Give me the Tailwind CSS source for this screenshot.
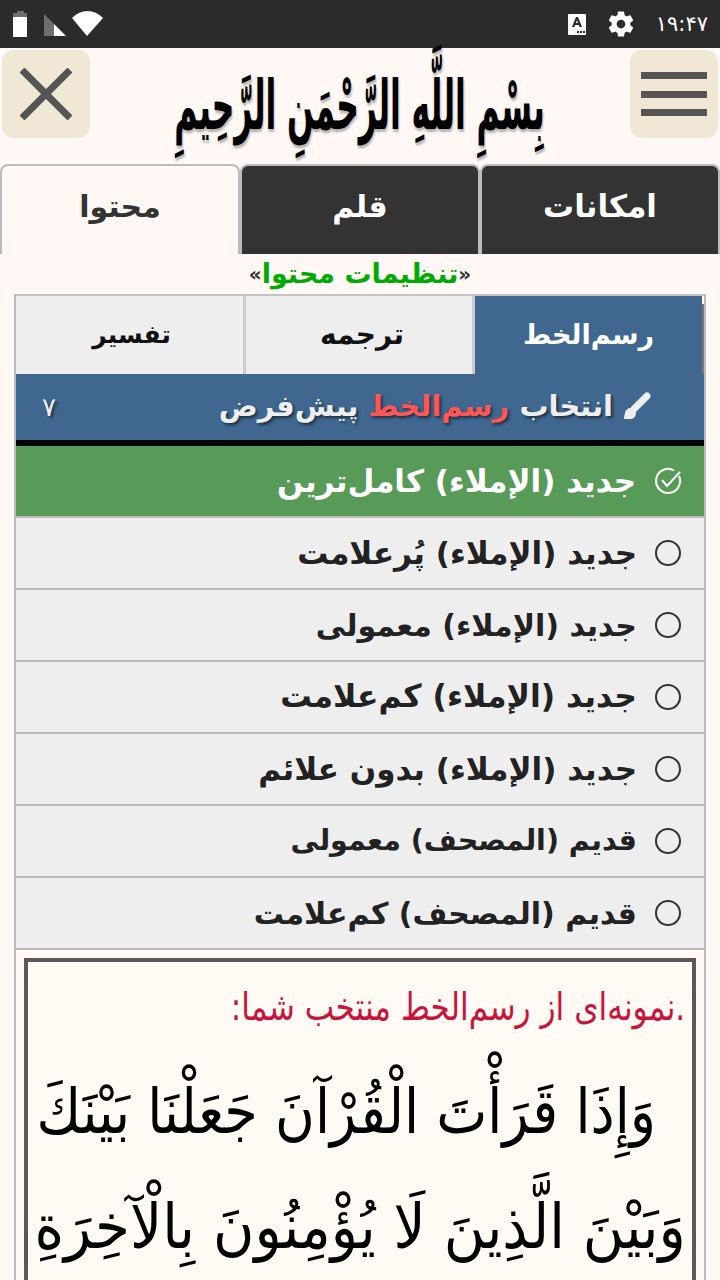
<!DOCTYPE html>
<html lang="fa" dir="rtl">
<head>
    <meta charset="UTF-8">
    <title>تنظیمات محتوا</title>
    <script src="https://cdn.jsdelivr.net/npm/@tailwindcss/browser@4"></script>
</head>
<body class="w-[720px] h-[1280px] overflow-hidden bg-[#fff8f5] font-['DejaVu_Sans',sans-serif]">
    <!-- status bar -->
    <div dir="ltr" class="h-12 bg-[#2b2b2b] flex items-center pr-[12px] text-white">
        <svg width="110" height="48" viewBox="0 0 110 48" fill="#fff">
            <path d="M17 11 h7 v2 h3 v4 H13 v-4 h4z" fill="#6e6e6e"/>
            <rect x="13" y="17" width="14" height="20"/>
            <path d="M44 14 L54 24 V36 H44z" fill="#6e6e6e"/>
            <path d="M54 24 L66 36 H54z"/>
            <path d="M87 36 L72 18 Q79 11 87.500 11 Q96 11 103 18z"/>
        </svg>
        <div class="ml-auto flex items-center">
            <svg width="18" height="21" viewBox="0 0 18 21" class="mr-[20px]">
                <rect width="18" height="21" rx="1" fill="#fff"/>
                <path d="M4 13 L8 3 h2 l4 10 h-2.400 l-.8-2 h-3.600 l-.8 2z M8 9 h2 l-1-3z" fill="#2b2b2b" fill-rule="evenodd"/>
                <path d="M9 17 h2 v2 h-2z M12 17 h2 v2 h-2z M15 17 h2 v2 h-2z" fill="#2b2b2b"/>
            </svg>
            <svg width="30" height="30" viewBox="0 0 24 24" fill="#fff" class="mr-[20px]">
                <path d="M19.430 12.980c.04-.32.07-.64.07-.98s-.03-.66-.07-.98l2.110-1.650c.19-.15.24-.42.12-.64l-2-3.460c-.12-.22-.39-.3-.61-.22l-2.490 1c-.52-.4-1.080-.73-1.690-.98l-.38-2.650C14.460 2.180 14.250 2 14 2h-4c-.25 0-.46.18-.49.42l-.38 2.650c-.61.25-1.170.59-1.690.98l-2.490-1c-.23-.09-.49 0-.61.22l-2 3.460c-.13.22-.07.49.12.64l2.110 1.650c-.04.32-.07.65-.07.98s.03.66.07.98l-2.110 1.650c-.19.15-.24.42-.12.64l2 3.460c.12.22.39.3.61.22l2.490-1c.52.4 1.080.73 1.690.98l.38 2.650c.03.24.24.42.49.42h4c.25 0 .46-.18.49-.42l.38-2.650c.61-.25 1.170-.59 1.690-.98l2.490 1c.23.09.49 0 .61-.22l2-3.460c.12-.22.07-.49-.12-.64l-2.110-1.650zM12 15.500c-1.930 0-3.500-1.570-3.500-3.500s1.570-3.500 3.500-3.500 3.500 1.570 3.500 3.500-1.570 3.500-3.500 3.500z"/>
            </svg>
            <span class="text-[21px] leading-none">۱۹:۴۷</span>
        </div>
    </div>

    <!-- header -->
    <div class="h-[116px] flex items-start px-[2px] pt-[2px]">
        <button class="w-[88px] h-[88px] shrink-0 rounded-xl bg-[#f0e8d4] flex items-center justify-center">
            <svg width="66" height="44" viewBox="0 0 66 44" fill="#555"><rect width="66" height="7" y="0"/><rect width="66" height="7" y="19"/><rect width="66" height="7" y="37"/></svg>
        </button>
        <div class="flex-1 w-0 flex justify-center">
            <span class="inline-block shrink-0 scale-x-[.46] text-[68px] leading-[112px] font-bold text-black [text-shadow:2px_3px_3px_#0004] whitespace-nowrap">بِسْمِ اللَّهِ الرَّحْمَنِ الرَّحِيمِ</span>
        </div>
        <button class="w-[88px] h-[88px] shrink-0 rounded-xl bg-[#f0e8d4] flex items-center justify-center">
            <svg width="52" height="52" viewBox="0 0 52 52" stroke="#555" stroke-width="7"><path d="M2 2 L50 50 M50 2 L2 50"/></svg>
        </button>
    </div>

    <!-- main tabs -->
    <div class="h-[90px] flex font-bold">
        <div class="w-[240px] pb-2 text-[31px] bg-[#333] text-white border-2 border-b-0 border-[#bbb] rounded-t-lg flex items-center justify-center">امکانات</div>
        <div class="w-[240px] pb-2 text-[30px] bg-[#333] text-white border-2 border-b-0 border-[#bbb] rounded-t-lg flex items-center justify-center">قلم</div>
        <div class="w-[240px] pb-2 text-[30px] bg-[#fff8f5] text-[#333] border-2 border-b-0 border-[#bbb] rounded-t-lg flex items-center justify-center">محتوا</div>
    </div>

    <div class="h-10 flex items-center justify-center text-[27px] font-bold text-[#0a0]"><span class="text-[#333] text-[20px]">«</span>تنظیمات محتوا<span class="text-[#333] text-[20px]">»</span></div>

    <!-- panel -->
    <div class="mx-[14px] border-x-2 border-[#bbb]">
        <div class="h-[80px] flex border-t-2 border-[#c4c4c4] text-[27px] font-bold text-[#111]">
            <div class="w-[2px] mt-[8px] bg-[#777]"></div>
            <div class="w-[227px] bg-[#3f678f] text-white flex items-center justify-center">رسم‌الخط</div>
            <div class="w-[229px] pl-[6px] bg-[#eee] border-r-[3px] border-[#ccc] flex items-center justify-center text-[28px]">ترجمه</div>
            <div class="flex-1 pl-[4px] bg-[#eee] border-r-[3px] border-[#ccc] flex items-center justify-center text-[25px]">تفسیر</div>
        </div>
        <div class="h-[72px] bg-[#3f678f] border-b-[6px] border-black flex items-center pr-[53px] pl-[26px] text-[29px] font-bold text-[#eee] [text-shadow:2px_2px_3px_#0008]">
            <svg width="30" height="30" viewBox="0 0 30 30" fill="#eee" class="ml-2"><path d="M26 4 L13 17" stroke="#eee" stroke-width="7" stroke-linecap="round"/><path d="M3 27 Q3 24 4 21 A5.500 5.500 0 1 1 10 27z"/></svg>
            <span>انتخاب <span class="text-[#f55]">رسم‌الخط</span> پیش‌فرض</span>
            <span class="mr-auto text-[26px] font-normal">۷</span>
        </div>
        <div class="h-[70px] bg-[#589a58] flex items-center pr-[22px] gap-[18px] text-[31px] font-bold text-white">
            <svg width="28" height="28" viewBox="0 0 28 28" fill="none" stroke="#fff" stroke-width="2"><path d="M25 9 A12 12 0 1 1 20 3.500"/><path d="M8 13 L13 19 L26 5"/></svg>
            جدید (الإملاء) کامل‌ترین
        </div>
        <div class="flex flex-col font-bold text-[#222]">
            <div class="h-[72px] bg-[#eee] border-t-2 border-[#bbb] flex items-center pr-[23px] gap-[18px] text-[31px]"><span class="size-[26px] rounded-full border-2 border-[#333]"></span>جدید (الإملاء) پُرعلامت</div>
            <div class="h-[72px] bg-[#eee] border-t-2 border-[#bbb] flex items-center pr-[23px] gap-[18px] text-[30px]"><span class="size-[26px] rounded-full border-2 border-[#333]"></span>جدید (الإملاء) معمولی</div>
            <div class="h-[72px] bg-[#eee] border-t-2 border-[#bbb] flex items-center pr-[23px] gap-[18px] text-[31.500px]"><span class="size-[26px] rounded-full border-2 border-[#333]"></span>جدید (الإملاء) کم‌علامت</div>
            <div class="h-[72px] bg-[#eee] border-t-2 border-[#bbb] flex items-center pr-[23px] gap-[18px] text-[31px]"><span class="size-[26px] rounded-full border-2 border-[#333]"></span>جدید (الإملاء) بدون علائم</div>
            <div class="h-[72px] bg-[#eee] border-t-2 border-[#bbb] flex items-center pr-[23px] gap-[18px] text-[28.500px]"><span class="size-[26px] rounded-full border-2 border-[#333]"></span>قدیم (المصحف) معمولی</div>
            <div class="h-[74px] bg-[#eee] border-y-2 border-[#bbb] flex items-center pr-[23px] gap-[18px] text-[30px]"><span class="size-[26px] rounded-full border-2 border-[#333]"></span>قدیم (المصحف) کم‌علامت</div>
        </div>
        <!-- sample, cut off by the bottom of the screen -->
        <div class="mx-[8px] mt-[8px] h-[322px] overflow-hidden border-4 border-b-0 border-[#5a5a5a] bg-[#fffaf4] flex flex-col items-start">
            <p class="shrink-0 whitespace-nowrap origin-right scale-x-[.82] text-[#c8143c] text-[38px] leading-[70px] mr-[7px] mt-[10px]">.نمونه‌ای از رسم‌الخط منتخب شما:</p>
            <p class="shrink-0 whitespace-nowrap origin-right scale-x-[.875] text-black text-[62px] leading-[112px] mr-[36px] mt-[14px]">وَإِذَا قَرَأْتَ الْقُرْآنَ جَعَلْنَا بَيْنَكَ</p>
            <p class="shrink-0 whitespace-nowrap origin-right scale-x-[.91] text-black text-[62px] leading-[112px] mr-[6px] mt-[3px]">وَبَيْنَ الَّذِينَ لَا يُؤْمِنُونَ بِالْآخِرَةِ</p>
        </div>
    </div>
</body>
</html>
